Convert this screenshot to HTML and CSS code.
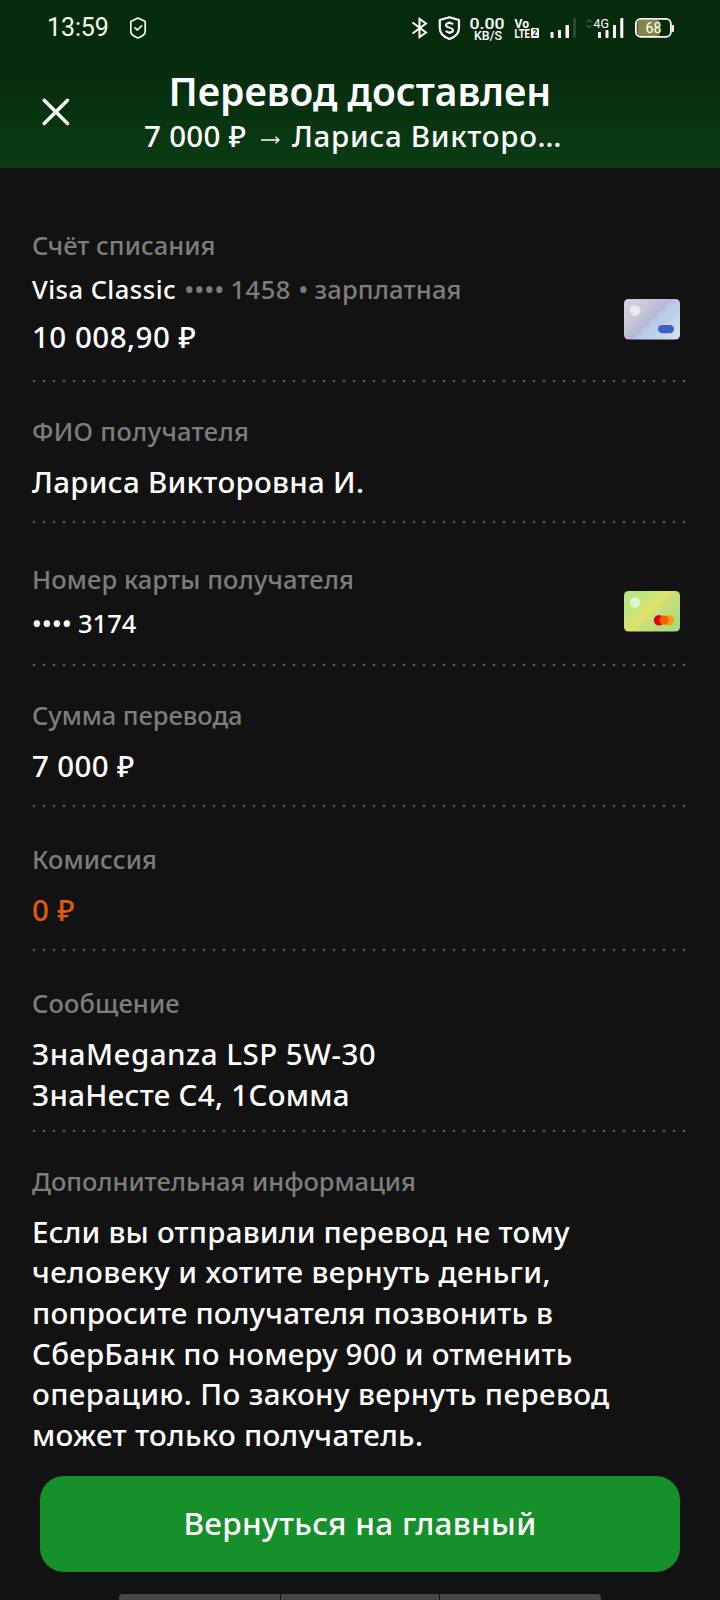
FILE: index.html
```
<!DOCTYPE html>
<html lang="ru">
<head>
<meta charset="utf-8">
<title>Перевод доставлен</title>
<link rel="stylesheet" href="styles.css">
</head>
<body>
<div class="screen">
  <header class="header">
    <div class="status">
      <span class="clock">13:59</span>
      <svg class="guard" width="18" height="22" viewBox="0 0 18 22" fill="none" stroke="#f0fff0" stroke-width="1.7" stroke-linejoin="round" stroke-linecap="round">
        <path d="M9 1 L16.2 4.4 V14.5 C16.2 17 12 19.8 9 21 C6 19.8 1.800 17 1.800 14.500 V4.400 Z"/>
        <path d="M6 10.800 L8.400 13 L12.600 8.800"/>
      </svg>
      <svg class="indicators" width="264" height="28" viewBox="411 14 264 28" fill="#fff">
        <g fill="none" stroke="#fff" stroke-width="2" stroke-linejoin="miter">
          <path d="M412.500 22.500 L426 32.500 L419.500 37 V19 L426 23.500 L412.500 33.500"/>
          <path d="M449.500 17.200 L459 20 V28 C459 34 454 37.500 449.500 39 C445 37.500 439.800 34 439.800 28 V20 Z" stroke-width="2.200" stroke-linejoin="round"/>
          <path d="M453 24.500 C452 22.500 446 22.500 446 25.300 C446 28.200 453 27 453 30.200 C453 33 447 33 445.800 30.800 M449.500 21.500 V23 M449.500 32.500 V34" stroke-width="2"/>
        </g>
        <text class="rate" x="469.500" y="28.500" textLength="35" lengthAdjust="spacingAndGlyphs">0.00</text>
        <text class="unit" x="474" y="40" textLength="28" lengthAdjust="spacingAndGlyphs">KB/S</text>
        <text class="volte" x="514.500" y="27.500" textLength="14.500" lengthAdjust="spacingAndGlyphs">Vo</text>
        <text class="volte" x="514.500" y="38" textLength="15.500" lengthAdjust="spacingAndGlyphs">LTE</text>
        <rect x="531" y="28" width="8" height="10" rx="1"/>
        <text class="sim" x="532.500" y="36.200">2</text>
        <rect x="550.500" y="32" width="3" height="6" rx=".7"/>
        <rect x="558" y="30" width="3" height="8" rx=".7"/>
        <rect x="565.500" y="25" width="3.500" height="13" rx=".7"/>
        <rect x="573" y="18" width="3" height="20" rx=".7" fill="#28492d"/>
        <path d="M587 22 L589 20 L591.500 22 M587 25.500 L589 27.500 L591.500 25.500" fill="none" stroke="#3f5c43" stroke-width="1.500"/>
        <text class="net" x="593.500" y="28" textLength="15.500" lengthAdjust="spacingAndGlyphs">4G</text>
        <rect x="598" y="32" width="3" height="6" rx=".7"/>
        <rect x="605.500" y="30" width="3" height="8" rx=".7"/>
        <rect x="613" y="25" width="3" height="13" rx=".7"/>
        <rect x="620.300" y="18" width="3" height="20" rx=".7"/>
        <rect x="637.500" y="20" width="22.500" height="16" rx="3" fill="#85854a"/>
        <rect x="635.900" y="18.900" width="35" height="18" rx="5" fill="none" stroke="#fff" stroke-width="1.800"/>
        <rect x="672" y="25" width="2" height="7" rx="1"/>
        <text class="level" x="645.500" y="33" textLength="16" lengthAdjust="spacingAndGlyphs">68</text>
      </svg>
    </div>
    <div class="bar">
      <svg class="close" width="28" height="28" viewBox="0 0 28 28" stroke="#fff" stroke-width="3.400" stroke-linecap="round"><path d="M2.200 2.200 L25.500 25.500 M25.500 2.200 L2.200 25.500"/></svg>
      <div class="heading">
        <h1 class="title">Перевод доставлен</h1>
        <p class="subtitle"><span class="sum">7 000 ₽</span><svg class="arrow" width="20" height="10" viewBox="0 0 20 10" fill="none" stroke="#fff" stroke-width="1.300"><path d="M0 5 H18 M14.500 1.800 L18 5 L14.500 8.200"/></svg><span class="name">Лариса Викторо…</span></p>
      </div>
    </div>
  </header>

  <main class="details">
    <section class="row row-account">
      <div>
        <div class="label">Счёт списания</div>
        <div class="card-line"><span class="card-name">Visa Classic</span><span class="mask">••••</span><span class="digits">1458</span><span class="sep">•</span><span class="kind">зарплатная</span></div>
        <div class="value balance ls-50">10 008,90 ₽</div>
      </div>
      <svg class="card card-visa" width="56" height="41" viewBox="0 0 56 41">
        <defs>
          <linearGradient id="visa" gradientUnits="userSpaceOnUse" x1="6" y1="-2" x2="50" y2="42"><stop offset="0" stop-color="#d5d2df"/><stop offset=".3" stop-color="#c7c6d8"/><stop offset=".49" stop-color="#b2b8d6"/><stop offset=".52" stop-color="#b6c7e6"/><stop offset=".75" stop-color="#c0d4e8"/><stop offset="1" stop-color="#d9dfea"/></linearGradient>
        </defs>
        <rect width="56" height="40.500" rx="4.500" fill="url(#visa)"/>
        <circle cx="11" cy="11.500" r="5.200" fill="#e9e9f1"/>
        <rect x="34" y="26" width="16" height="8.300" rx="4.150" fill="#3c60c5"/>
      </svg>
    </section>
    <section class="row row-name">
      <div>
        <div class="label ls-30">ФИО получателя</div>
        <div class="value">Лариса Викторовна И.</div>
      </div>
    </section>
    <section class="row row-card">
      <div>
        <div class="label ls-10">Номер карты получателя</div>
        <div class="card-line"><span class="mask-own">••••</span><span class="digits-own">3174</span></div>
      </div>
      <svg class="card card-mc" width="56" height="41" viewBox="0 0 56 41">
        <defs>
          <linearGradient id="mc" gradientUnits="userSpaceOnUse" x1="6" y1="-2" x2="50" y2="42"><stop offset="0" stop-color="#b2e68a"/><stop offset=".3" stop-color="#c5e679"/><stop offset=".49" stop-color="#e0e365"/><stop offset=".53" stop-color="#cfe07c"/><stop offset=".75" stop-color="#b5dd79"/><stop offset="1" stop-color="#a3e07f"/></linearGradient>
        </defs>
        <rect width="56" height="40.500" rx="4.500" fill="url(#mc)"/>
        <circle cx="11" cy="11.500" r="5.200" fill="#dcf7c8"/>
        <circle cx="35" cy="29.200" r="5.200" fill="#e3000f"/>
        <circle cx="45" cy="29.200" r="5.200" fill="#f99a1c"/>
        <circle cx="40" cy="29.200" r="4.600" fill="#ff5f00"/>
      </svg>
    </section>
    <section class="row row-sum">
      <div>
        <div class="label ls-neg">Сумма перевода</div>
        <div class="value ls-35">7 000 ₽</div>
      </div>
    </section>
    <section class="row row-fee">
      <div>
        <div class="label ls-10">Комиссия</div>
        <div class="value fee">0 ₽</div>
      </div>
    </section>
    <section class="row row-message">
      <div>
        <div class="label ls-10">Сообщение</div>
        <div class="value"><span class="ls-50">ЗнаMeganza LSP 5W-30</span><br><span class="ls-30">ЗнаНесте С4, 1Сомма</span></div>
      </div>
    </section>
    <section class="row row-info">
      <div>
        <div class="label ls-neg">Дополнительная информация</div>
        <div class="value"><span class="ls-20">Если вы отправили перевод не тому</span><br><span class="ls-35">человеку и хотите вернуть деньги,</span><br><span class="ls-15">попросите получателя позвонить в</span><br><span class="ls-20">СберБанк по номеру 900 и отменить</span><br><span class="ls-35">операцию. По закону вернуть перевод</span><br><span class="ls-30">может только получатель.</span></div>
      </div>
    </section>
  </main>

  <footer class="footer">
    <button class="button">Вернуться на главный</button>
    <div class="navbar"><i></i><i></i><i></i></div>
  </footer>
</div>
</body>
</html>
```
FILE: styles.css
```
* { box-sizing: border-box; }
body { margin: 0; background: #121212; }
.screen {
  width: 720px;
  height: 1600px;
  overflow: hidden;
  display: flex;
  flex-direction: column;
  background: #121212;
  color: #fff;
  font-family: "Noto Sans", sans-serif;
  font-weight: 500;
}

.header {
  height: 168px;
  flex: none;
  background: linear-gradient(#072a0d 0, #072b0d 65px, #0a3d14 168px);
}
.status { display: flex; align-items: center; height: 56px; padding-left: 47px; }
.clock { width: 82px; font: 400 25px/30px Roboto, sans-serif; letter-spacing: -.1px; color: #f0fff0; }
.guard { flex: none; }
.indicators { flex: none; margin-left: 264px; }
.indicators text { font-family: Roboto, sans-serif; }
.rate { font-size: 15.500px; font-weight: 500; }
.unit { font-size: 12px; font-weight: 500; }
.volte { font-size: 12.500px; font-weight: 700; }
.sim { font-size: 8.500px; font-weight: 700; fill: #072a0d; }
.net { font-size: 12.500px; font-weight: 400; }
.level { font-size: 14.500px; font-weight: 400; }

.bar { display: flex; padding: 12px 0 0 42px; }
.close { margin: 30px 74px 0 0; flex: none; }
.heading { width: 420px; }
.title {
  margin: 0 0 0 24.500px;
  font-size: 39px;
  line-height: 46px;
  font-weight: 600;
  white-space: nowrap;
}
.subtitle { display: flex; align-items: center; margin: 1px 0 0; font-size: 29.500px; line-height: 41px; white-space: nowrap; }
.sum { width: 117px; letter-spacing: .3px; }
.arrow { flex: none; margin-top: 8px; }
.name { margin-left: 11px; letter-spacing: .7px; }

.details { height: 1280px; flex: none; overflow: hidden; }
.row {
  display: flex;
  justify-content: space-between;
  position: relative;
  padding: 0 40px 0 32px;
  white-space: nowrap;
}
/* Dotted divider spans the list width, independent of the row padding. */
.row:not(.row-info)::after {
  content: "";
  position: absolute;
  left: 32px;
  right: 34px;
  bottom: 0;
  height: 4px;
  background: radial-gradient(circle at 2px 2px, #5c5c5c .8px, transparent 1.700px) 0 0 / 10px 4px repeat-x;
}
.row-account { height: 215px; padding-top: 62px; }
.row-name { height: 141px; padding-top: 33px; }
.row-card { height: 143px; padding-top: 39.500px; }
.row-sum { height: 141px; padding-top: 33px; }
.row-fee { height: 144px; padding-top: 36px; }
.row-message { height: 181px; padding-top: 36px; }
.row-info { height: 315px; padding-top: 32.500px; }

.label { font-size: 25.500px; line-height: 30px; color: #7d7d7d; }
.value { margin-top: 15.500px; font-size: 29.500px; line-height: 40.700px; letter-spacing: .3px; }
.row-message .value, .row-info .value { margin-top: 16px; }
.balance { margin-top: 12.500px; }
.fee { color: #e0590c; }
.card-line { display: flex; margin-top: 14px; font-size: 25.500px; line-height: 30px; }
.card-name { width: 152.500px; letter-spacing: .5px; }
.mask, .mask-own { letter-spacing: .4px; }
.mask { width: 46px; }
.mask, .digits, .sep, .kind { color: #7d7d7d; }
.digits { width: 68px; letter-spacing: .5px; }
.sep { width: 16px; }
.kind { letter-spacing: .15px; }
.mask-own { width: 46px; }
.digits-own { letter-spacing: 0; }
.card { flex: none; }
.card-visa { margin-top: 69px; }
.card-mc { margin-top: 27.500px; }

.ls-neg { letter-spacing: -.04px; }
.ls-10 { letter-spacing: .12px; }
.ls-15 { letter-spacing: .16px; }
.ls-20 { letter-spacing: .22px; }
.ls-30 { letter-spacing: .3px; }
.value.ls-35, .ls-35 { letter-spacing: .38px; }
.value.ls-50, .ls-50 { letter-spacing: .5px; }

.footer { padding: 28px 40px 0; }
.button {
  display: block;
  width: 640px;
  height: 96px;
  padding: 0 0 3px;
  border: 0;
  border-radius: 24px;
  background: #16902b;
  color: #fff;
  font: 500 31.500px/40px "Noto Sans", sans-serif;
  letter-spacing: .3px;
}
.navbar {
  display: grid;
  grid-template-columns: 161px 158px 161px;
  gap: 1px;
  width: 482px;
  height: 8px;
  margin: 22px 0 0 79px;
  border-radius: 4px;
  overflow: hidden;
}
.navbar i { background: #484848; }
```
